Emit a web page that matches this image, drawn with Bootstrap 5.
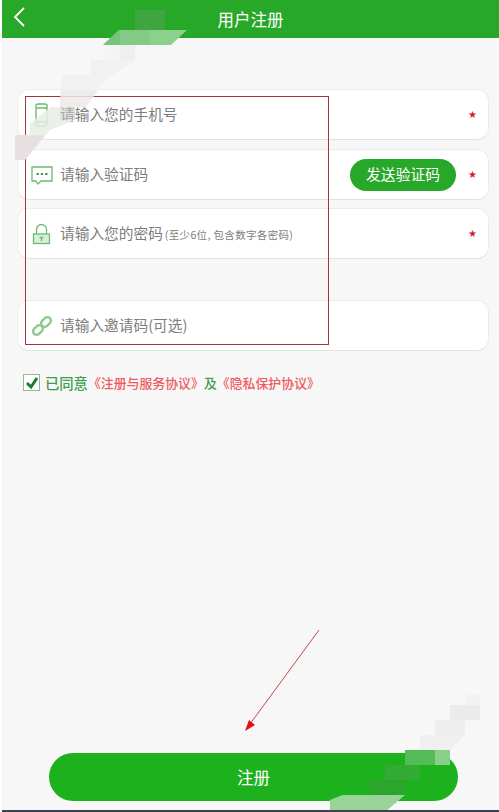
<!DOCTYPE html>
<html lang="zh">
  <head>
    <meta charset="UTF-8" />
    <meta name="viewport" content="width=device-width, initial-scale=1.0" />
    <title>用户注册</title>
    <link href="https://cdn.jsdelivr.net/npm/bootstrap@5.3.0/dist/css/bootstrap.min.css" rel="stylesheet" />
    <style>
      html, body { height: 812px; overflow: hidden; }
      body {
        background: #fff;
        font-family: "Noto Sans CJK SC", "Liberation Sans", sans-serif;
        color: #7d7d7d;
      }
      .app-shell {
        height: 812px;
        margin-left: 2px;
        background: #f7f7f7;
        border-bottom: 2px solid #3b4350;
        position: relative;
        overflow: hidden;
      }
      .top-bar { height: 38px; background: #28a828; color: #fff; font-size: 16.5px; }
      .back-icon { left: 10px; top: 6px; }
      .reg-form { padding: 51px 10px 0 15px; }
      .field-box {
        height: 51px;
        background: #fff;
        border: 1px solid #ececec;
        border-bottom-color: #e2e2e2;
        border-radius: 12px;
        padding: 0 11px 0 12px;
        font-size: 14.7px;
        margin-bottom: 9px;
      }
      .field-box.tight-gap { margin-bottom: 8px; }
      .field-box.invite-box { margin-top: 41px; margin-bottom: 0; }
      .field-icon { width: 26px; height: 26px; flex: none; margin-right: 4px; }
      .hint-small { font-size: 10.5px; letter-spacing: .35px; margin-left: 2px; }
      .req-star { color: #d01c3a; font-size: 10px; margin-left: auto; font-family: "DejaVu Sans", sans-serif; }
      .send-code {
        background: #28a828; color: #fff; border: 0; border-radius: 16px;
        height: 32px; width: 106px; font-size: 14.8px; padding: 0; margin-right: 12px;
      }
      .send-code + .req-star { margin-left: 0; }
      .agree-row { margin: 21px 0 0 6px; font-size: 12.9px; font-weight: 500; color: #3d9f4c; }
      .agree-lead { font-size: 14.3px; }
      .agree-box {
        width: 17px; height: 17px; background: #fff; border: 1px solid #9bb59b; margin-right: 5px;
      }
      .agree-row a { color: #ef5a62; text-decoration: none; }
      .submit-btn {
        position: absolute; left: 47px; top: 753px; width: 409px; height: 48px;
        background: #1eb11e; color: #fff; border: 0; border-radius: 24px; font-size: 16.5px;
      }
      .mark-frame { position: absolute; left: 23px; top: 96px; width: 304px; height: 249px; border: 1px solid #a0353c; pointer-events: none; }
      .overlay-svg { position: absolute; left: -2px; top: 0; pointer-events: none; }
    </style>
  </head>
  <body>
    <div class="app-shell">
      <div class="top-bar d-flex align-items-center justify-content-center position-relative">
        <svg class="back-icon position-absolute" width="14" height="22" viewBox="0 0 14 22" fill="none" stroke="#fff" stroke-width="1.8"><path d="M12 2 3 11l9 9" /></svg>
        <span>用户注册</span>
      </div>

      <form class="reg-form">
        <div class="field-box d-flex align-items-center">
          <svg class="field-icon" viewBox="0 0 26 26" fill="none" stroke="#6dbb72" stroke-width="1.4"><rect x="6" y="2" width="11" height="22" rx="2" /><path d="M6 6h11M6 20h11" /></svg>
          <span>请输入您的手机号</span>
          <span class="req-star">★</span>
        </div>
        <div class="field-box tight-gap d-flex align-items-center">
          <svg class="field-icon" viewBox="0 0 26 26" fill="none" stroke="#6dbb72" stroke-width="1.3"><path d="M2 5h20v14H11l-3 3-2-3H2z" /><path d="M6.5 12h2.4M10.8 12h2.4M15.1 12h2.4" stroke-width="2.2" stroke="#3f9f4c" /></svg>
          <span>请输入验证码</span>
          <button type="button" class="send-code ms-auto">发送验证码</button>
          <span class="req-star">★</span>
        </div>
        <div class="field-box d-flex align-items-center">
          <svg class="field-icon" viewBox="0 0 26 26" fill="none" stroke="#6dbb72" stroke-width="1.3"><rect x="3.5" y="13" width="16" height="9.5" fill="#d9efd9" /><path d="M6.5 13V8.5a5 5 0 0 1 10 0V13M11.5 16v4M9.5 16.5h4" /></svg>
          <span>请输入您的密码<span class="hint-small">(至少6位, 包含数字各密码)</span></span>
          <span class="req-star">★</span>
        </div>
        <div class="field-box invite-box d-flex align-items-center">
          <svg class="field-icon" viewBox="0 0 26 26" fill="none" stroke="#8ccb90" stroke-width="2.4"><rect x="2.5" y="13.5" width="11" height="7" rx="3.5" transform="rotate(-45 8 17)" /><rect x="10.5" y="5.5" width="11" height="7" rx="3.5" transform="rotate(-45 16 9)" /></svg>
          <span>请输入邀请码(可选)</span>
        </div>
        <div class="agree-row d-flex align-items-center">
          <span class="agree-box d-flex align-items-center justify-content-center">
            <svg width="14" height="14" viewBox="0 0 14 14" fill="none" stroke="#1f7a2c" stroke-width="3"><path d="M2 7l4 4 6-9" /></svg>
          </span>
          <span class="agree-lead">已同意</span>
          <span><a href="#">《注册与服务协议》</a>及<a href="#">《隐私保护协议》</a></span>
        </div>
      </form>

      <button type="button" class="submit-btn">注册</button>

      <div class="mark-frame"></div>
      <svg class="overlay-svg" width="499" height="812" viewBox="0 0 499 812" shape-rendering="crispEdges">
        <defs>
          <clipPath id="clipTop"><path d="M135 10h30v20h22l-16 15h-36v15l-30 20-10 15-20 25-25 10-25 30H15v-25l45-35 2-25 28-18 32-30h13z" /></clipPath>
          <clipPath id="clipBottom"><path d="M465 695h15v25l-30 30v15l-45 30-20 17h-85l50-20 55-45 45-45z" /></clipPath>
        </defs>
        <path d="M319 630 250 724" stroke="#c8444c" stroke-width="1" shape-rendering="auto" />
        <path d="M245 731l4-11 6 5z" fill="#e01010" shape-rendering="auto" />
        <g clip-path="url(#clipTop)">
          <rect x="135" y="10" width="30" height="20" fill="#3fa63f" />
          <rect x="90" y="30" width="30" height="15" fill="#76c47a" />
          <rect x="120" y="30" width="30" height="15" fill="#84c986" />
          <rect x="150" y="30" width="40" height="15" fill="#8bd08b" />
          <rect x="105" y="45" width="15" height="15" fill="#f4f4f4" />
          <rect x="120" y="45" width="15" height="15" fill="#efefef" />
          <rect x="90" y="60" width="45" height="15" fill="#f1f1f1" />
          <rect x="60" y="75" width="60" height="15" fill="#f2f2f2" />
          <g opacity=".85">
            <rect x="60" y="90" width="45" height="17" fill="#eee9e9" />
            <rect x="30" y="107" width="30" height="13" fill="#e9eee6" />
            <rect x="30" y="120" width="45" height="15" fill="#e4eee4" />
          </g>
          <rect x="60" y="107" width="15" height="13" fill="#c9c9c9" fill-opacity=".55" />
          <rect x="15" y="135" width="30" height="25" fill="#e8e0e0" />
        </g>
        <g clip-path="url(#clipBottom)">
          <rect x="465" y="695" width="15" height="10" fill="#f2f2f2" />
          <rect x="450" y="705" width="30" height="15" fill="#ebebeb" />
          <rect x="435" y="720" width="30" height="15" fill="#eeeeee" />
          <rect x="420" y="735" width="45" height="15" fill="#f0f0f0" />
          <rect x="405" y="750" width="30" height="15" fill="#55bb55" />
          <rect x="435" y="750" width="15" height="15" fill="#88d088" />
          <rect x="385" y="765" width="35" height="15" fill="#33aa33" />
          <rect x="370" y="780" width="35" height="15" fill="#2ba52b" />
          <rect x="330" y="795" width="75" height="17" fill="#98d498" />
        </g>
      </svg>
    </div>
    <script src="https://cdn.jsdelivr.net/npm/bootstrap@5.3.0/dist/js/bootstrap.bundle.min.js"></script>
  </body>
</html>
